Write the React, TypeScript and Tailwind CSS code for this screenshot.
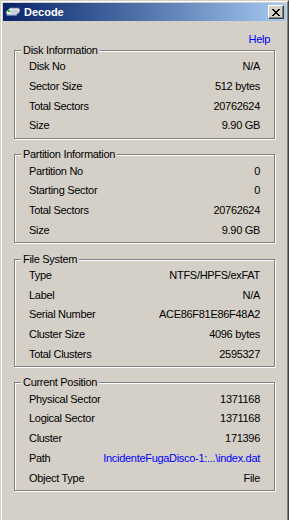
import React from 'react';

type Row = { label: string; value: string; link?: boolean };
type Group = { title: string; rows: Row[] };

const groups: Group[] = [
  {
    title: 'Disk Information',
    rows: [
      { label: 'Disk No', value: 'N/A' },
      { label: 'Sector Size', value: '512 bytes' },
      { label: 'Total Sectors', value: '20762624' },
      { label: 'Size', value: '9.90 GB' },
    ],
  },
  {
    title: 'Partition Information',
    rows: [
      { label: 'Partition No', value: '0' },
      { label: 'Starting Sector', value: '0' },
      { label: 'Total Sectors', value: '20762624' },
      { label: 'Size', value: '9.90 GB' },
    ],
  },
  {
    title: 'File System',
    rows: [
      { label: 'Type', value: 'NTFS/HPFS/exFAT' },
      { label: 'Label', value: 'N/A' },
      { label: 'Serial Number', value: 'ACE86F81E86F48A2' },
      { label: 'Cluster Size', value: '4096 bytes' },
      { label: 'Total Clusters', value: '2595327' },
    ],
  },
  {
    title: 'Current Position',
    rows: [
      { label: 'Physical Sector', value: '1371168' },
      { label: 'Logical Sector', value: '1371168' },
      { label: 'Cluster', value: '171396' },
      { label: 'Path', value: 'IncidenteFugaDisco-1:...\\index.dat', link: true },
      { label: 'Object Type', value: 'File' },
    ],
  },
];

function DriveIcon() {
  return (
    <svg width="16" height="16" viewBox="0 0 16 16">
      <path d="M1 9 L5 5 H14 L15 8 L11 12 H2 Z" fill="#9aa6b4" />
      <path d="M1 8 L5 4 H14 L15 7 L11 11 H2 Z" fill="#e8ecf0" stroke="#6b7888" strokeWidth="0.8" />
      <ellipse cx="9" cy="7.5" rx="4" ry="2" fill="#c4ccd6" />
      <rect x="3" y="6" width="2" height="2" fill="#22c022" />
      <path d="M2 11 L11 11 L11 12 L2 12 Z" fill="#5a7fb0" />
    </svg>
  );
}

function CloseButton() {
  return (
    <div className="flex h-[14px] w-[16px] items-center justify-center border border-t-white border-l-white border-r-[#404040] border-b-[#404040] bg-[#d4d0c8] shadow-[inset_-1px_-1px_0_#808080]">
      <svg width="8" height="7" viewBox="0 0 8 7" shapeRendering="crispEdges">
        <path d="M0 0h2v1h-2zM6 0h2v1h-2zM1 1h2v1h-2zM5 1h2v1h-2zM2 2h4v1h-4zM3 3h2v1h-2zM2 4h4v1h-4zM1 5h2v1h-2zM5 5h2v1h-2zM0 6h2v1h-2zM6 6h2v1h-2z" fill="#000" />
      </svg>
    </div>
  );
}

function GroupBox({ group }: { group: Group }) {
  return (
    <div className="relative border border-[#808080] px-[14px] pt-[6px] pb-[2px] shadow-[inset_1px_1px_0_#fff,1px_1px_0_#fff]">
      <span className="absolute left-[6px] top-[-7px] bg-[#d4d0c8] px-[2px] leading-[13px]">{group.title}</span>
      {group.rows.map((r) => (
        <div key={r.label} className="flex h-[19.7px] items-center justify-between leading-[13px]">
          <span>{r.label}</span>
          <span className={r.link ? 'text-[#0000ff]' : ''}>{r.value}</span>
        </div>
      ))}
    </div>
  );
}

export default function App() {
  return (
    <div className="h-[520px] w-[289px] overflow-hidden border-t border-l border-r border-t-[#d4d0c8] border-l-[#d4d0c8] border-r-[#404040] bg-[#d4d0c8] font-['Liberation_Sans',Arial,sans-serif] text-[11px] tracking-[-0.3px] text-black">
      <div className="h-full border-t border-l border-r border-t-white border-l-white border-r-[#808080] px-[1px] pt-[1px]">
        <div className="flex h-[18px] items-center bg-gradient-to-r from-[#0a246a] to-[#a6caf0] pl-[2px] pr-[2px]">
          <DriveIcon />
          <span className="ml-[3px] flex-1 text-[11px] font-bold tracking-normal text-white">Decode</span>
          <CloseButton />
        </div>
        <div className="px-[11px]">
          <div className="mt-[12px] flex h-[13px] justify-end pr-[5px] leading-[13px] text-[#0000ff]">Help</div>
          <div className="mt-[4px] flex flex-col gap-[15.5px]">
            {groups.map((g) => (
              <GroupBox key={g.title} group={g} />
            ))}
          </div>
        </div>
      </div>
    </div>
  );
}
